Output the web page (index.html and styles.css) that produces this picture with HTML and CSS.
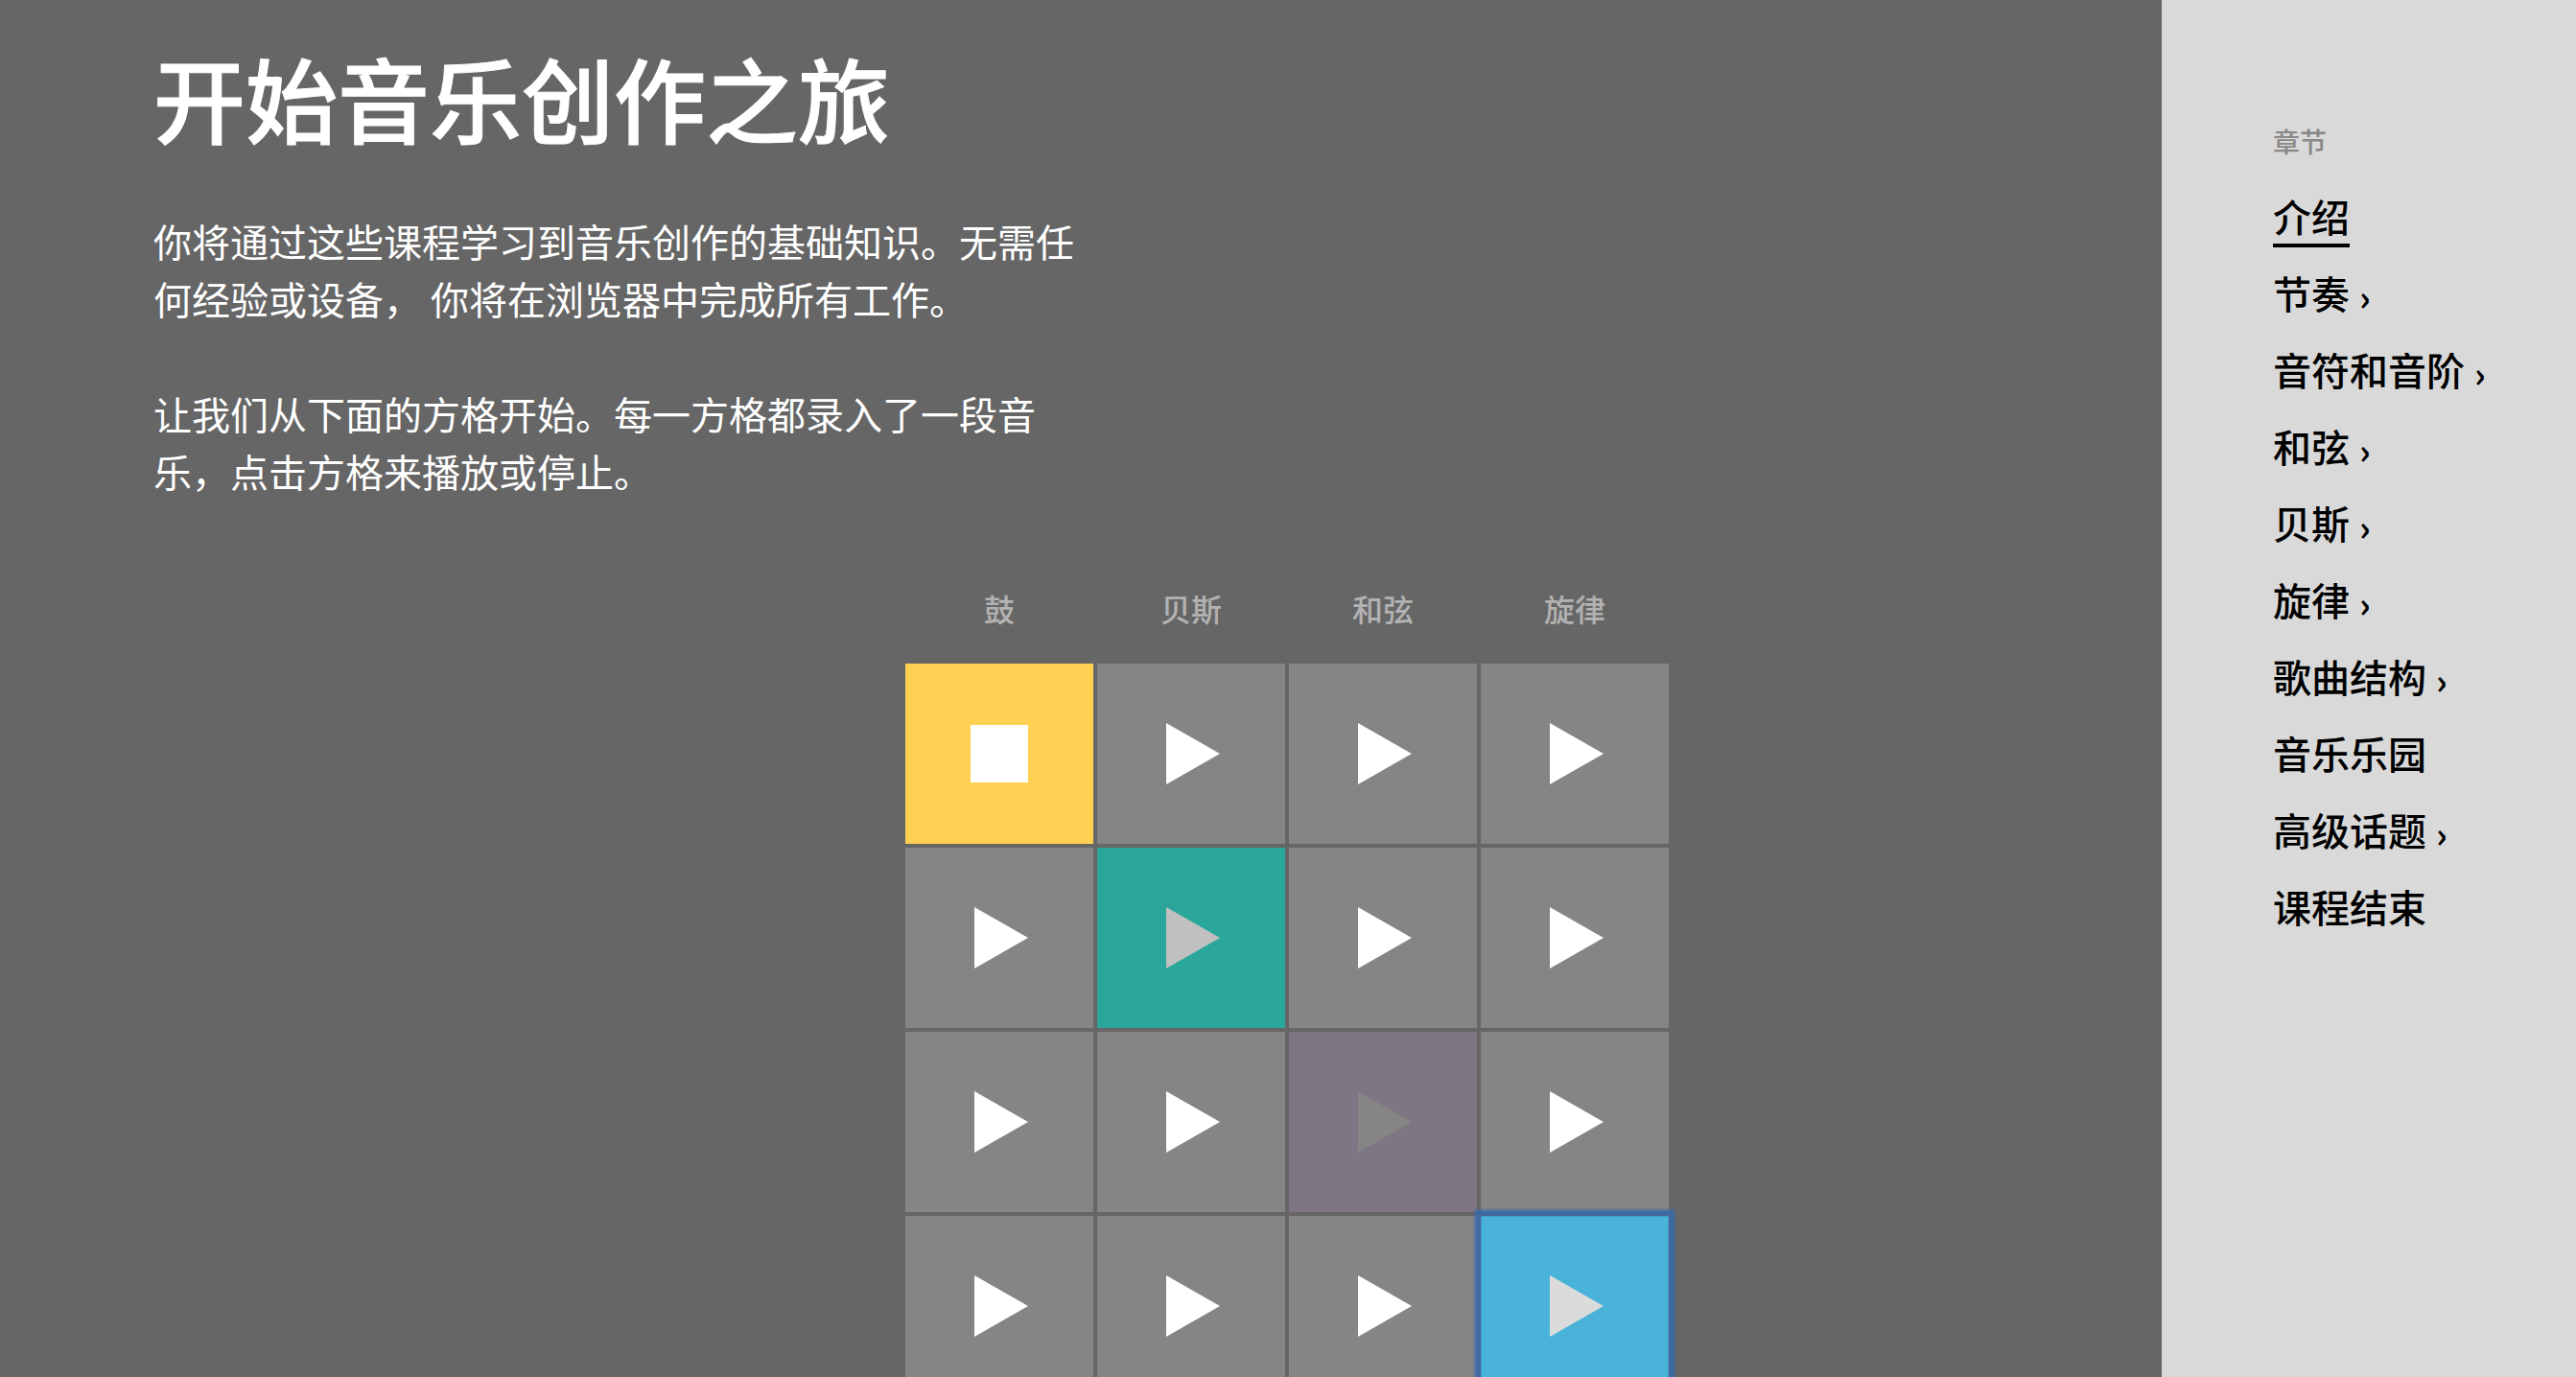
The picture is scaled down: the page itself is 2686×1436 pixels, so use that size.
FILE: index.html
```html
<!DOCTYPE html>
<html lang="zh-CN">
<head>
<meta charset="utf-8">
<meta name="viewport" content="width=device-width, initial-scale=1">
<title>开始音乐创作之旅</title>
<link rel="stylesheet" href="styles.css">
</head>
<body>
<svg class="sprite" aria-hidden="true">
  <symbol id="play" viewBox="0 0 60 64"><path d="M4 0L60 32L4 64Z"/></symbol>
  <symbol id="stop" viewBox="0 0 60 64"><path d="M0 2H60V62H0Z"/></symbol>
</svg>
<main class="lesson">
  <header class="intro">
    <h1 class="title">开始音乐创作之旅</h1>
    <p class="text">你将通过这些课程学习到音乐创作的基础知识。无需任何经验或设备， 你将在浏览器中完成所有工作。</p>
    <p class="text">让我们从下面的方格开始。每一方格都录入了一段音乐，点击方格来播放或停止。</p>
  </header>
  <section class="board">
    <div class="grid">
      <span class="label">鼓</span>
      <span class="label">贝斯</span>
      <span class="label">和弦</span>
      <span class="label">旋律</span>

      <button class="cell cell-drums" aria-label="停止"><svg class="icon"><use href="#stop"/></svg></button>
      <button class="cell" aria-label="播放"><svg class="icon"><use href="#play"/></svg></button>
      <button class="cell" aria-label="播放"><svg class="icon"><use href="#play"/></svg></button>
      <button class="cell" aria-label="播放"><svg class="icon"><use href="#play"/></svg></button>

      <button class="cell" aria-label="播放"><svg class="icon"><use href="#play"/></svg></button>
      <button class="cell cell-bass" aria-label="播放"><svg class="icon"><use href="#play"/></svg></button>
      <button class="cell" aria-label="播放"><svg class="icon"><use href="#play"/></svg></button>
      <button class="cell" aria-label="播放"><svg class="icon"><use href="#play"/></svg></button>

      <button class="cell" aria-label="播放"><svg class="icon"><use href="#play"/></svg></button>
      <button class="cell" aria-label="播放"><svg class="icon"><use href="#play"/></svg></button>
      <button class="cell cell-chords" aria-label="播放"><svg class="icon"><use href="#play"/></svg></button>
      <button class="cell" aria-label="播放"><svg class="icon"><use href="#play"/></svg></button>

      <button class="cell" aria-label="播放"><svg class="icon"><use href="#play"/></svg></button>
      <button class="cell" aria-label="播放"><svg class="icon"><use href="#play"/></svg></button>
      <button class="cell" aria-label="播放"><svg class="icon"><use href="#play"/></svg></button>
      <button class="cell cell-melody" aria-label="播放"><svg class="icon"><use href="#play"/></svg></button>
    </div>
  </section>
</main>
<nav class="chapters" aria-labelledby="chapters-title">
  <h2 class="chapters-title" id="chapters-title">章节</h2>
  <ul class="chapters-list">
    <li class="chapter"><a class="link link-current" href="#intro" aria-current="page">介绍</a></li>
    <li class="chapter"><a class="link" href="#beats">节奏</a><span class="more">›</span></li>
    <li class="chapter"><a class="link" href="#notes">音符和音阶</a><span class="more">›</span></li>
    <li class="chapter"><a class="link" href="#chords">和弦</a><span class="more">›</span></li>
    <li class="chapter"><a class="link" href="#bass">贝斯</a><span class="more">›</span></li>
    <li class="chapter"><a class="link" href="#melodies">旋律</a><span class="more">›</span></li>
    <li class="chapter"><a class="link" href="#structure">歌曲结构</a><span class="more">›</span></li>
    <li class="chapter"><a class="link" href="#playground">音乐乐园</a></li>
    <li class="chapter"><a class="link" href="#advanced">高级话题</a><span class="more">›</span></li>
    <li class="chapter"><a class="link" href="#end">课程结束</a></li>
  </ul>
</nav>
</body>
</html>
```

FILE: styles.css
```css
* {
  box-sizing: border-box;
}

body {
  display: grid;
  grid-template-columns: minmax(0, 1fr) 432px;
  height: 100vh;
  margin: 0;
  overflow: hidden;
  background: #666;
  font-family: "Noto Sans CJK SC", sans-serif;
}

.sprite {
  position: absolute;
  width: 0;
  height: 0;
}

.lesson {
  overflow-y: auto;
  scrollbar-width: none;
  color: #fff;
}

.intro {
  padding: 43px 160px 0;
}

.title {
  margin: 0 0 62px;
  font-size: 96px;
  font-weight: 500;
  line-height: 116px;
  -webkit-text-stroke: 1px currentColor;
}

.text {
  max-width: 960px;
  margin: 0 0 60px;
  font-size: 40px;
  font-weight: 400;
  line-height: 60px;
}

.board {
  display: flex;
  justify-content: center;
  padding: 25px 0 60px 430px;
}

.grid {
  display: grid;
  grid-template-columns: repeat(4, 196px);
  gap: 4px;
}

.label {
  margin-bottom: 26px;
  color: #b2b2b2;
  font-size: 32px;
  font-weight: 500;
  line-height: 56px;
  text-align: center;
}

.cell {
  display: flex;
  align-items: center;
  justify-content: center;
  height: 188px;
  padding: 0;
  border: 0;
  background: #858585;
  color: #fff;
}

.icon {
  width: 60px;
  height: 64px;
  fill: currentColor;
}

.cell-drums {
  background: #ffd052;
}

.cell-bass {
  background: #2ba69a;
  color: #c0c0c0;
}

.cell-chords {
  background: #7f7684;
  color: #858585;
}

.cell-melody {
  background: #49b3d9;
  color: #dbdbdb;
  box-shadow: inset 0 0 0 1px #409ccf, 0 0 0 2px #4b6690, 0 0 3px 6px #366aae;
}

.chapters {
  padding: 108px 0 0 116px;
  background: #d9d9d9;
  color: #000;
}

.chapters-title {
  margin: 0 0 2px;
  color: #888;
  font-size: 28px;
  font-weight: 500;
  line-height: 78px;
}

.chapters-list {
  margin: 0;
  padding: 0;
  list-style: none;
}

.chapter {
  display: flex;
  align-items: center;
  gap: 10px;
  height: 80px;
  font-size: 40px;
  font-weight: 500;
  white-space: nowrap;
}

.link {
  padding: 1px 0 7px;
  border-bottom: 4px solid transparent;
  border-top: 4px solid transparent;
  color: inherit;
  line-height: 44px;
  text-decoration: none;
}

.link-current {
  border-bottom-color: #000;
}

.more {
  font-size: 36px;
  font-weight: 700;
}
```
